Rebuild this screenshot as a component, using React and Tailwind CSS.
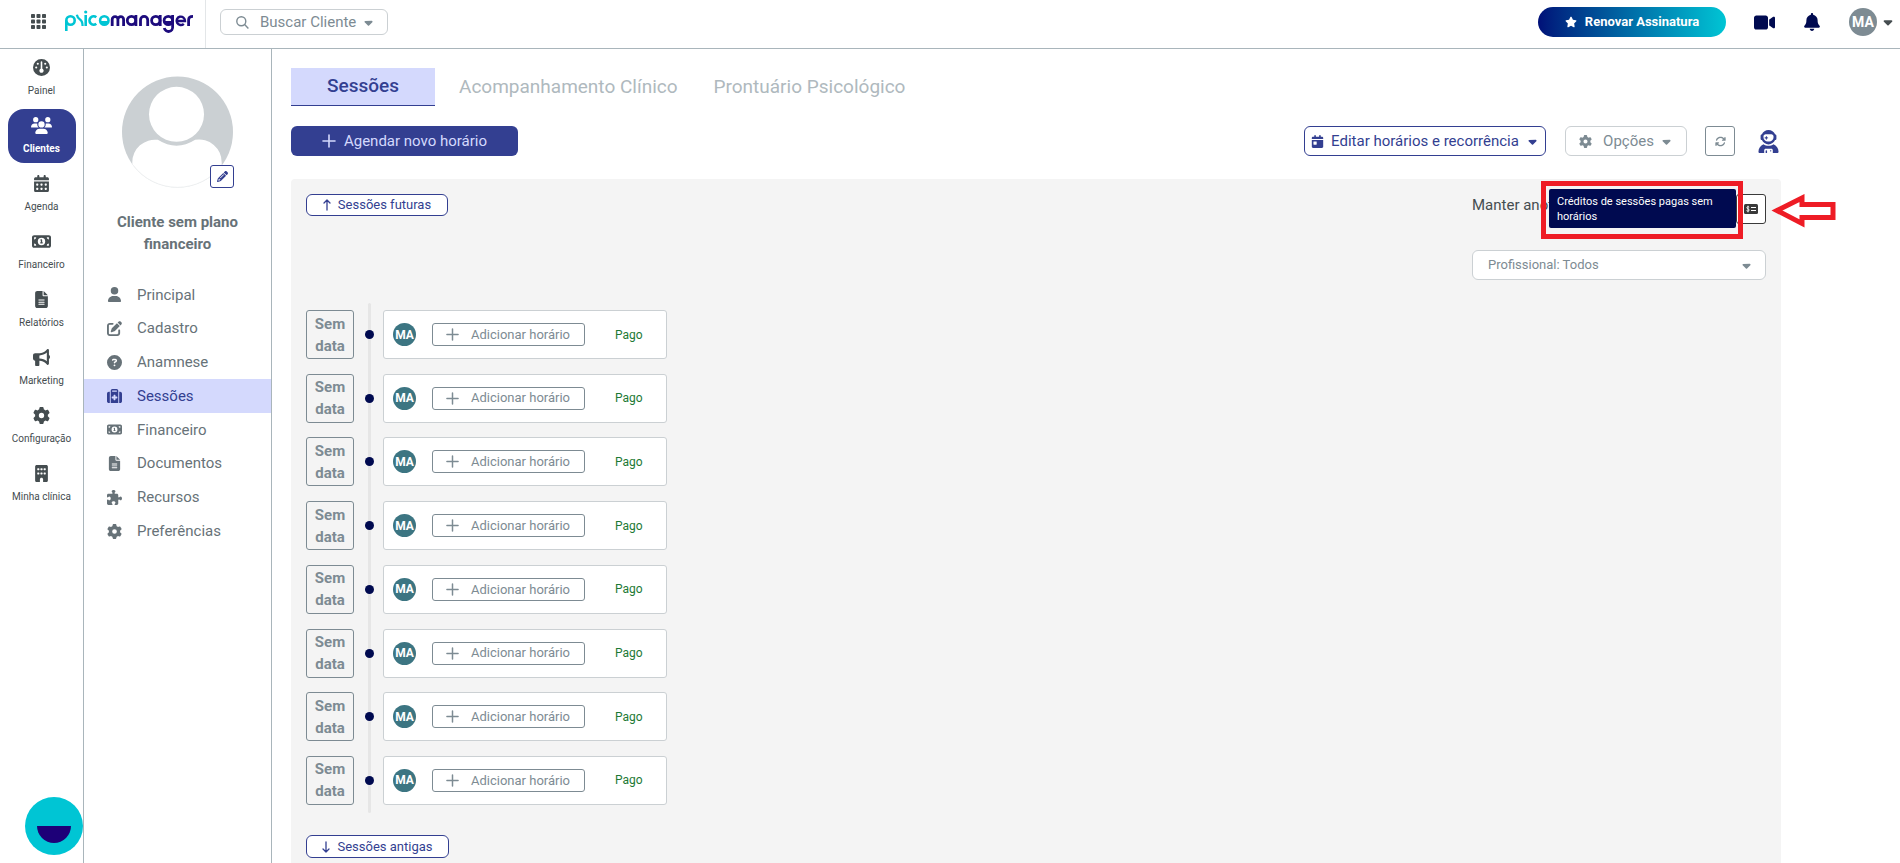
import React, { useState } from "react";
import {
  FaGauge,
  FaUsers,
  FaCalendarDays,
  FaMoneyBill1,
  FaFileLines,
  FaBullhorn,
  FaGear,
  FaBuilding,
  FaUser,
  FaPenToSquare,
  FaCircleQuestion,
  FaSuitcaseMedical,
  FaPuzzlePiece,
  FaCaretDown,
  FaStar,
  FaVideo,
  FaBell,
  FaCalendarDay,
  FaArrowsRotate,
  FaUserAstronaut,
  FaPencil,
} from "react-icons/fa6";

const mainMenu = [
  { label: "Painel", icon: FaGauge, size: 17 },
  { label: "Clientes", icon: FaUsers, size: 21 },
  { label: "Agenda", icon: FaCalendarDays, size: 17 },
  { label: "Financeiro", icon: FaMoneyBill1, size: 19 },
  { label: "Relatórios", icon: FaFileLines, size: 17 },
  { label: "Marketing", icon: FaBullhorn, size: 17 },
  { label: "Configuração", icon: FaGear, size: 17 },
  { label: "Minha clínica", icon: FaBuilding, size: 17 },
];

const clientMenu = [
  { label: "Principal", icon: FaUser },
  { label: "Cadastro", icon: FaPenToSquare },
  { label: "Anamnese", icon: FaCircleQuestion },
  { label: "Sessões", icon: FaSuitcaseMedical },
  { label: "Financeiro", icon: FaMoneyBill1 },
  { label: "Documentos", icon: FaFileLines },
  { label: "Recursos", icon: FaPuzzlePiece },
  { label: "Preferências", icon: FaGear },
];

const tabs = ["Sessões", "Acompanhamento Clínico", "Prontuário Psicológico"];

const sessions = [1, 2, 3, 4, 5, 6, 7, 8];

const PlusIcon = ({ size }) => (
  <svg width={size} height={size} viewBox="0 0 14 14" aria-hidden="true">
    <path
      d="M7 1v12M1 7h12"
      stroke="currentColor"
      strokeWidth="1.6"
      strokeLinecap="round"
    />
  </svg>
);

const ArrowIcon = ({ down }) => (
  <svg
    width="8"
    height="12"
    viewBox="0 0 8 12"
    fill="none"
    className={down ? "rotate-180" : ""}
    aria-hidden="true"
  >
    <path
      d="M4 11V1M1 4l3-3 3 3"
      stroke="currentColor"
      strokeWidth="1.3"
      strokeLinecap="round"
      strokeLinejoin="round"
    />
  </svg>
);

const AppsIcon = () => (
  <svg width="15" height="15" viewBox="0 0 15 15" fill="#454d50">
    {[0, 5.5, 11].map((y) =>
      [0, 5.5, 11].map((x) => (
        <rect key={`${x}-${y}`} x={x} y={y} width="4" height="4" rx="0.8" />
      ))
    )}
  </svg>
);

const CreditIcon = () => (
  <svg width="14" height="10" viewBox="0 0 14 10" aria-hidden="true">
    <rect width="14" height="10" rx="1.5" fill="#3a3a3a" />
    <path
      d="M5.2 3.2C4.600 2.500 2.700 2.600 2.800 3.800C2.900 5 5.200 4.700 5.200 6C5.200 7.300 3.200 7.400 2.500 6.600M4 1.700v6.600"
      stroke="#fff"
      strokeWidth="0.9"
      fill="none"
    />
    <path d="M7 3.500h5M7 6.500h5" stroke="#fff" strokeWidth="1" />
  </svg>
);

const Logo = () => (
  <svg
    width="130"
    height="24"
    viewBox="0 0 130 24"
    fill="none"
    strokeWidth="2.600"
    role="img"
    aria-label="psicomanager"
  >
    <g stroke="#00c5d4">
      <path d="M2.300 21V10.500" />
      <circle cx="6.500" cy="10.500" r="4.200" />
      <path d="M12.800 4.800Q13.500 8 16 9.500T18.600 16" strokeWidth="2.300" />
      <path d="M21.700 5v11" />
      <path d="M32.300 7.200a4.200 4.200 0 1 0 0 6.600" />
      <circle cx="40.300" cy="10.500" r="4.200" />
    </g>
    <circle cx="21.700" cy="2" r="1.600" fill="#00c5d4" />
    <path d="M36 11h8.600a4.300 4.300 0 0 1-8.600 0z" fill="#00c5d4" />
    <g stroke="#1d0b7d" strokeWidth="2.800">
      <path d="M48.200 16V9.500a2.800 2.800 0 0 1 5.700 0V16M53.900 9.500a2.800 2.800 0 0 1 5.700 0V16" />
      <circle cx="67.500" cy="10.500" r="4.200" />
      <path d="M71.900 5v11" />
      <path d="M76.500 16v-6a3.600 3.600 0 0 1 7.200 0v6" />
      <circle cx="91.800" cy="10.500" r="4.200" />
      <path d="M96.200 5v11" />
      <circle cx="104.300" cy="10.500" r="4.200" />
      <path d="M108.600 5v11.500a4 4 0 0 1-8.300 1.500" />
      <path d="M112.500 11h8.500a4.200 4.200 0 1 0-1.200 2.800" strokeWidth="2.400" />
      <path d="M124.600 16v-6q0-3.600 4.400-3.600" />
    </g>
    <path d="M100 11h8.600a4.300 4.300 0 0 1-8.600 0z" fill="#1d0b7d" />
  </svg>
);

const ClientAvatar = () => (
  <svg
    width="113"
    height="112"
    viewBox="0 0 114 114"
    className="block"
    role="img"
    aria-label="Foto do cliente"
  >
    <defs>
      <clipPath id="avatar-clip">
        <circle cx="57" cy="57" r="56.500" />
      </clipPath>
    </defs>
    <g clipPath="url(#avatar-clip)">
      <rect width="114" height="114" fill="#cbd0d3" />
      <path
        d="M11 114V88a23 23 0 0 1 26-23q19 12 38 0a23 23 0 0 1 27 23v26z"
        fill="#fff"
      />
      <circle cx="56" cy="39" r="28" fill="#fff" />
    </g>
    <path
      d="M12 91a56.500 56.500 0 0 0 90 0"
      fill="none"
      stroke="#eef0f1"
      strokeWidth="1"
    />
  </svg>
);

const Header = () => (
  <header className="flex h-[49px] shrink-0 items-center border-b border-[#a9b5bb] bg-white">
    <div className="flex h-full w-[206px] items-start gap-[18px] border-r border-[#e3e6e8] pl-[31px]">
      <button type="button" aria-label="Aplicativos" className="mt-[14px]">
        <AppsIcon />
      </button>
      <a href="#inicio" className="mt-[10px]">
        <Logo />
      </a>
    </div>
    <button
      type="button"
      className="mb-1 ml-[14px] flex h-[26px] w-[168px] items-center rounded-md border border-[#cbd0d3] pl-[15px] text-[15px] text-[#7d8b93]"
    >
      <svg width="13" height="13" viewBox="0 0 13 13" fill="none">
        <circle cx="5.300" cy="5.300" r="4.500" stroke="currentColor" strokeWidth="1.400" />
        <path d="M8.600 8.600l3.800 3.800" stroke="currentColor" strokeWidth="1.400" />
      </svg>
      <span className="ml-[11px]">Buscar Cliente</span>
      <FaCaretDown className="ml-[6px]" size={13} />
    </button>
    <div className="mb-1 ml-auto flex items-center text-[#000a50]">
      <button
        type="button"
        className="flex h-[30px] w-[188px] items-center justify-center gap-2 rounded-full bg-gradient-to-r from-[#000f78] to-[#00c5d4] text-[13px] font-bold text-white"
      >
        <FaStar size={12} />
        Renovar Assinatura
      </button>
      <button type="button" aria-label="Vídeo" className="ml-7">
        <FaVideo size={21} />
      </button>
      <button type="button" aria-label="Notificações" className="ml-7">
        <FaBell size={18} />
      </button>
      <button type="button" className="mr-[5px] ml-7 flex items-center gap-1">
        <span className="flex size-7 items-center justify-center rounded-full bg-[#7d8b93] text-[14px] font-bold text-white">
          MA
        </span>
        <FaCaretDown size={14} className="text-[#454d50]" />
      </button>
    </div>
  </header>
);

const MainSidebar = () => (
  <aside className="flex w-[84px] shrink-0 flex-col border-r border-[#a9b5bb]">
    <nav className="flex flex-col items-center gap-1 pt-[2px]">
      {mainMenu.map(({ label, icon: Icon, size }) => (
        <a
          key={label}
          href={`#${label}`}
          className={`flex h-[54px] w-[68px] flex-col items-center rounded-2xl ${
            label === "Clientes"
              ? "bg-[#333f91] font-bold text-white"
              : "text-[#454d50]"
          }`}
        >
          <span className="flex h-8 items-center">
            <Icon size={size} />
          </span>
          <span className="whitespace-nowrap text-[10px] leading-[15px]">
            {label}
          </span>
        </a>
      ))}
    </nav>
  </aside>
);

const ClientSidebar = () => (
  <aside className="flex w-[188px] shrink-0 flex-col border-r border-[#a9b5bb]">
    <div className="relative mx-auto mt-[27px]">
      <ClientAvatar />
      <button
        type="button"
        aria-label="Editar foto"
        className="absolute right-0 bottom-0 flex h-[23px] w-6 items-center justify-center rounded-[3px] border border-[#333f91] bg-white text-[#333f91]"
      >
        <FaPencil size={11} />
      </button>
    </div>
    <h2 className="mt-[23px] px-6 text-center text-[15px] leading-[22px] font-bold text-[#677278]">
      Cliente sem plano financeiro
    </h2>
    <nav className="mt-[23px] grid h-[270px] grid-rows-8">
      {clientMenu.map(({ label, icon: Icon }) => (
        <a
          key={label}
          href={`#${label}`}
          className={`flex items-center pl-[23px] text-[15px] ${
            label === "Sessões"
              ? "bg-[#d4d9fd] text-[#333f91]"
              : "text-[#677278]"
          }`}
        >
          <span className="flex w-[30px]">
            <Icon size={15} />
          </span>
          {label}
        </a>
      ))}
    </nav>
  </aside>
);

const SessionRow = () => (
  <li className="flex h-[49px] items-center">
    <div className="flex h-full w-12 items-center justify-center rounded-[3px] border border-[#7d8b93] text-center text-[15px] leading-[22px] font-bold text-[#7d8b93]">
      Sem
      <br />
      data
    </div>
    <span className="relative ml-[11px] size-[9px] rounded-full bg-[#000a50]" />
    <div className="ml-[9px] flex h-full w-[284px] items-center rounded-[3px] border border-[#cbd0d3] bg-white pl-[9px]">
      <span className="flex size-[23px] items-center justify-center rounded-full bg-[#3c7582] text-[12px] font-bold text-white">
        MA
      </span>
      <button
        type="button"
        className="ml-4 flex h-[23px] w-[153px] items-center rounded-[3px] border border-[#7d8b93] pl-[13px] text-[13px] text-[#7d8b93]"
      >
        <PlusIcon size={13} />
        <span className="ml-3">Adicionar horário</span>
      </button>
      <span className="ml-[30px] text-[12px] text-[#1c7a35]">Pago</span>
    </div>
  </li>
);

const SessionsPanel = () => (
  <section className="mt-[23px] grow rounded-t bg-[#f4f4f4] px-[15px] pt-[15px]">
    <div className="flex items-start justify-between">
      <button
        type="button"
        className="flex h-[22px] w-[142px] items-center justify-center gap-[7px] rounded-md border border-[#333f91] bg-white text-[13px] text-[#333f91]"
      >
        <ArrowIcon />
        Sessões futuras
      </button>
      <div className="flex w-[294px] flex-col">
        <div className="relative flex h-[30px] justify-between">
          <span className="text-[15px] leading-[22px] text-[#454d50]">
            Manter anot
          </span>
          <button
            type="button"
            aria-label="Créditos de sessões"
            className="flex w-[30px] items-center justify-center rounded-[3px] border border-[#3a3a3a] bg-white"
          >
            <CreditIcon />
          </button>
          {/* Tooltip with its highlight frame */}
          <div className="absolute -top-[13px] left-[69px] h-[58px] w-[202px] border-[5px] border-[#ee1c25] p-[3px]">
            <div
              role="tooltip"
              className="h-[39px] w-[187px] rounded-[2px] bg-[#000a50] px-2 py-[5px] text-[11px] leading-[15px] text-white"
            >
              Créditos de sessões pagas sem horários
            </div>
          </div>
          <svg
            width="65"
            height="34"
            viewBox="0 0 65 34"
            className="absolute top-0 left-[299px]"
            aria-hidden="true"
          >
            <path
              d="M6 16.500L31 4v6.500h31v13H31v6z"
              fill="#fff"
              stroke="#ee1c25"
              strokeWidth="5"
            />
          </svg>
        </div>
        <div className="relative mt-[26px]">
          <select
            aria-label="Profissional"
            className="h-[30px] w-full appearance-none rounded-md border border-[#cbd0d3] bg-white pl-[15px] text-[13px] text-[#7d8b93]"
          >
            <option>Profissional: Todos</option>
          </select>
          <FaCaretDown
            size={13}
            className="pointer-events-none absolute top-[9px] right-[13px] text-[#7d8b93]"
          />
        </div>
      </div>
    </div>

    <div className="relative mt-[23px]">
      <div className="absolute top-0 bottom-0 left-[62px] w-[3px] rounded bg-[#e6e6e6]" />
      <ul className="flex h-[510px] flex-col justify-between pt-[7px] pb-2">
        {sessions.map((id) => (
          <SessionRow key={id} />
        ))}
      </ul>
    </div>

    <button
      type="button"
      className="mt-[22px] flex h-[23px] w-[143px] items-center justify-center gap-[7px] rounded-md border border-[#333f91] bg-white text-[13px] text-[#333f91]"
    >
      <ArrowIcon down />
      Sessões antigas
    </button>
  </section>
);

const App = () => {
  const [activeTab, setActiveTab] = useState("Sessões");

  return (
    <div className="flex min-h-screen flex-col bg-white font-['Roboto',sans-serif]">
      <Header />
      <div className="flex grow">
        <MainSidebar />
        <ClientSidebar />
        <main className="flex grow flex-col pt-[19px] pr-[119px] pl-[19px]">
          <div className="flex h-[38px]" role="tablist">
            {tabs.map((tab) => (
              <button
                key={tab}
                type="button"
                role="tab"
                aria-selected={activeTab === tab}
                onClick={() => setActiveTab(tab)}
                className={`text-[19px] ${
                  activeTab === tab
                    ? "mr-[6px] w-36 border-b border-[#333f91] bg-[#d4d9fd] font-medium text-[#333f91]"
                    : "px-[18px] text-[#afb9be]"
                }`}
              >
                {tab}
              </button>
            ))}
          </div>

          <div className="mt-5 flex h-[30px] items-stretch text-[15px] whitespace-nowrap">
            <button
              type="button"
              className="mr-auto flex w-[227px] items-center justify-center gap-2 rounded-md bg-[#333f91] text-[#d4d9fd]"
            >
              <PlusIcon size={14} />
              Agendar novo horário
            </button>
            <button
              type="button"
              className="flex w-[242px] items-center justify-center gap-[7px] rounded-md border border-[#333f91] text-[#333f91]"
            >
              <FaCalendarDay size={13} />
              Editar horários e recorrência
              <FaCaretDown size={13} />
            </button>
            <button
              type="button"
              className="ml-[19px] flex w-[122px] items-center justify-center rounded-md border border-[#cbd0d3] text-[#7d8b93]"
            >
              <FaGear size={13} />
              <span className="mr-[6px] ml-[11px]">Opções</span>
              <FaCaretDown size={13} />
            </button>
            <button
              type="button"
              aria-label="Atualizar"
              className="ml-[18px] flex w-[30px] items-center justify-center rounded-[3px] border border-[#7d8b93] text-[#7d8b93]"
            >
              <FaArrowsRotate size={11} />
            </button>
            <button
              type="button"
              aria-label="Assistente"
              className="mr-px ml-[22px] flex items-center text-[#333f91]"
            >
              <FaUserAstronaut size={23} />
            </button>
          </div>

          <SessionsPanel />
        </main>
      </div>

      {/* Chat launcher */}
      <button
        type="button"
        aria-label="Abrir chat"
        className="fixed bottom-[8px] left-[25px] size-[58px] rounded-full bg-[#00c5d4]"
      >
        <svg width="58" height="58" viewBox="0 0 58 58">
          <path d="M12 29h34a17 17 0 0 1-34 0z" fill="#1d0078" />
        </svg>
      </button>
    </div>
  );
};

export default App;
